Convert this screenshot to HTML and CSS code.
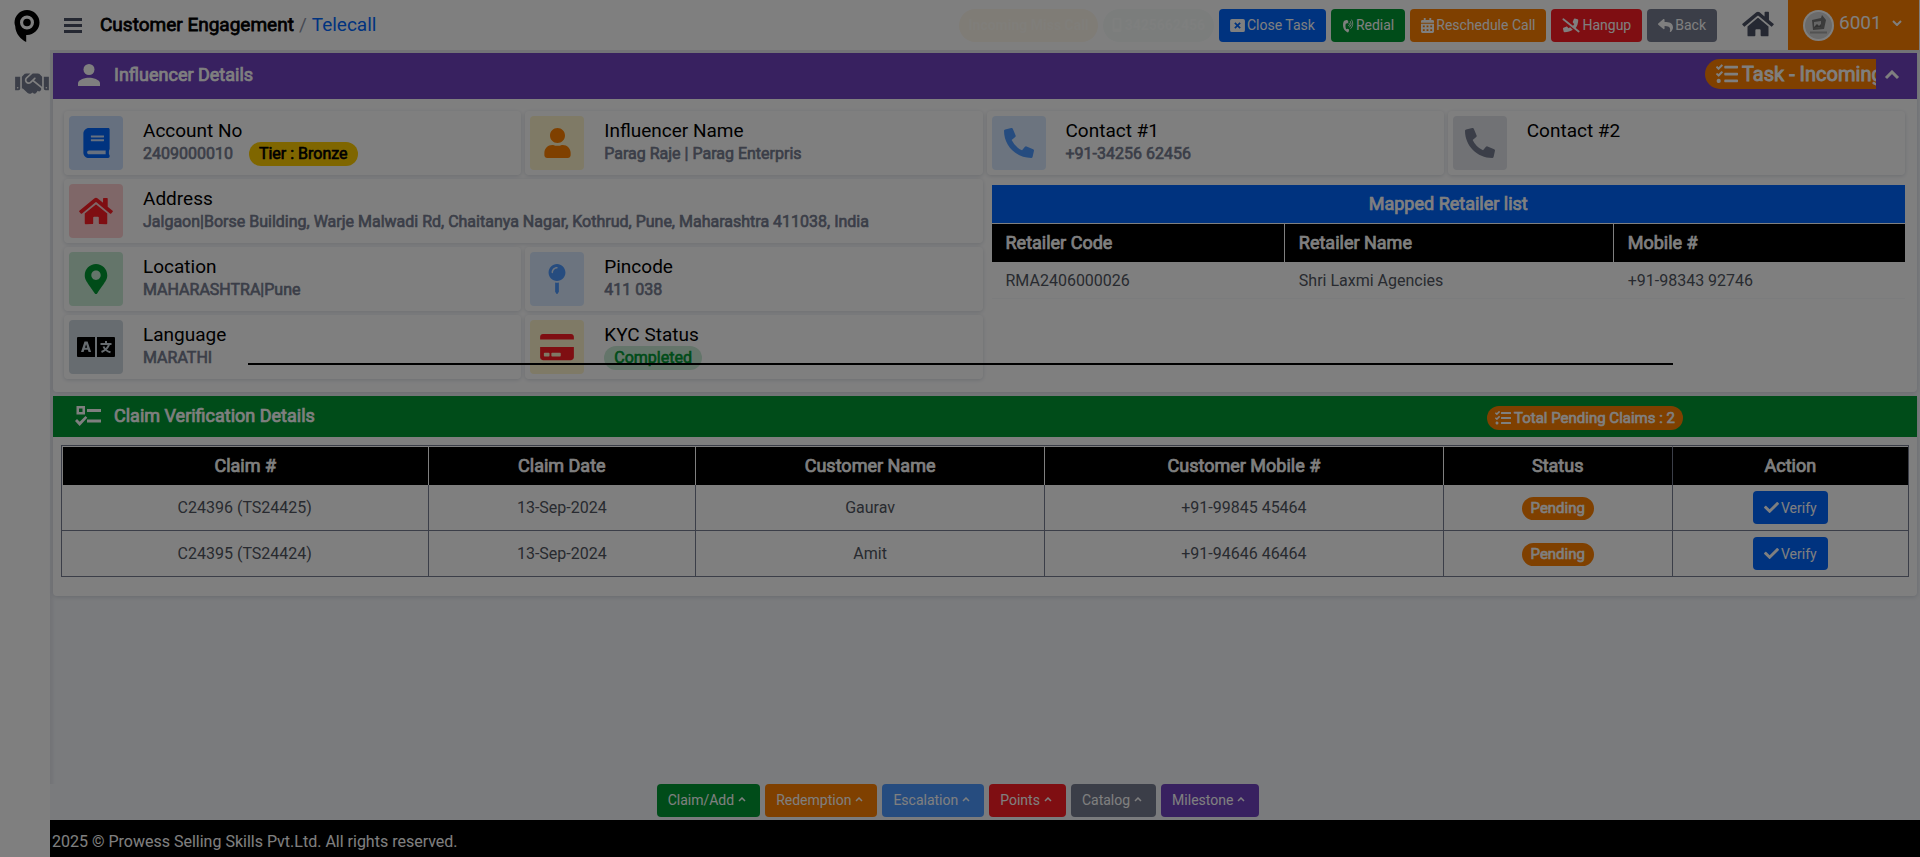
FILE: index.html
```html
<!DOCTYPE html>
<html lang="en">
<head>
<meta charset="utf-8">
<meta name="viewport" content="width=device-width, initial-scale=1">
<title>Customer Engagement - Telecall</title>
<link rel="stylesheet" href="styles.css">
</head>
<body>
<svg class="sprite" aria-hidden="true">
  <symbol id="home" viewBox="0 0 576 512"><path d="M280.37 148.26L96 300.11V464a16 16 0 0 0 16 16l112.06-.29a16 16 0 0 0 15.92-16V368a16 16 0 0 1 16-16h64a16 16 0 0 1 16 16v95.64a16 16 0 0 0 16 16.05L464 480a16 16 0 0 0 16-16V300L295.67 148.26a12.19 12.19 0 0 0-15.3 0zM571.6 251.47L488 182.56V44.05a12 12 0 0 0-12-12h-56a12 12 0 0 0-12 12v72.61L318.47 43a48 48 0 0 0-61 0L4.34 251.47a12 12 0 0 0-1.6 16.9l25.5 31A12 12 0 0 0 45.15 301l235.22-193.74a12.19 12.19 0 0 1 15.3 0L530.9 301a12 12 0 0 0 16.9-1.6l25.5-31a12 12 0 0 0-1.7-16.93z"/></symbol>
  <symbol id="book" viewBox="0 0 448 512"><path d="M448 360V24c0-13.3-10.7-24-24-24H96C43 0 0 43 0 96v320c0 53 43 96 96 96h328c13.3 0 24-10.7 24-24v-16c0-7.5-3.5-14.3-8.9-18.7-4.2-15.4-4.2-59.3 0-74.7 5.4-4.3 8.9-11.1 8.9-18.6zM128 134c0-3.300 2.700-6 6-6h212c3.300 0 6 2.700 6 6v20c0 3.300-2.700 6-6 6H134c-3.300 0-6-2.700-6-6v-20zm0 64c0-3.300 2.700-6 6-6h212c3.300 0 6 2.700 6 6v20c0 3.300-2.700 6-6 6H134c-3.300 0-6-2.700-6-6v-20zm253.400 250H96c-17.700 0-32-14.300-32-32 0-17.600 14.400-32 32-32h285.400c-1.900 17.100-1.900 46.900 0 64z"/></symbol>
  <symbol id="user" viewBox="0 0 448 512"><path d="M224 256c70.700 0 128-57.300 128-128S294.700 0 224 0 96 57.300 96 128s57.300 128 128 128zm89.600 32h-16.700c-22.200 10.200-46.900 16-72.900 16s-50.600-5.800-72.900-16h-16.700C60.200 288 0 348.200 0 422.400V464c0 26.500 21.500 48 48 48h352c26.500 0 48-21.500 48-48v-41.600c0-74.200-60.200-134.400-134.400-134.400z"/></symbol>
  <symbol id="phone" viewBox="0 0 512 512"><path d="M497.390 361.800l-112-48a24 24 0 0 0-28 6.900l-49.600 60.600A370.660 370.660 0 0 1 130.600 204.110l60.600-49.600a23.940 23.940 0 0 0 6.900-28l-48-112A24.160 24.160 0 0 0 122.600.610l-104 24A24 24 0 0 0 0 48c0 256.500 207.900 464 464 464a24 24 0 0 0 23.400-18.600l24-104a24.290 24.290 0 0 0-14.010-27.600z"/></symbol>
  <symbol id="marker" viewBox="0 0 384 512"><path d="M172.268 501.670C26.970 291.031 0 269.413 0 192 0 85.961 85.961 0 192 0s192 85.961 192 192c0 77.413-26.970 99.031-172.268 309.670-9.535 13.774-29.930 13.773-39.464 0zM192 272c44.183 0 80-35.817 80-80s-35.817-80-80-80-80 35.817-80 80 35.817 80 80 80z"/></symbol>
  <symbol id="pin" viewBox="0 0 288 512"><path d="M112 316.940v156.690l22.020 33.020c4.750 7.120 15.220 7.120 19.970 0L176 473.630V316.940c-10.390 1.920-21.060 3.060-32 3.060s-21.610-1.140-32-3.060zM144 0C64.470 0 0 64.470 0 144s64.470 144 144 144 144-64.470 144-144S223.530 0 144 0zm0 76c-37.500 0-68 30.500-68 68 0 6.620-5.380 12-12 12s-12-5.380-12-12c0-50.730 41.280-92 92-92 6.620 0 12 5.380 12 12s-5.380 12-12 12z"/></symbol>
  <symbol id="card" viewBox="0 0 576 512"><path d="M0 432c0 26.500 21.500 48 48 48h480c26.500 0 48-21.500 48-48V256H0v176zm192-68c0-6.600 5.400-12 12-12h136c6.600 0 12 5.400 12 12v40c0 6.600-5.400 12-12 12H204c-6.600 0-12-5.400-12-12v-40zm-128 0c0-6.600 5.400-12 12-12h72c6.600 0 12 5.400 12 12v40c0 6.600-5.400 12-12 12H76c-6.600 0-12-5.400-12-12v-40zM576 80v48H0V80c0-26.500 21.500-48 48-48h480c26.500 0 48 21.500 48 48z"/></symbol>
  <symbol id="reply" viewBox="0 0 512 512"><path d="M8.309 189.836L184.313 37.851C199.719 24.546 224 35.347 224 56.015v80.053c160.629 1.839 288 34.032 288 186.258 0 61.441-39.581 122.309-83.333 154.132-13.653 9.931-33.111-2.533-28.077-18.631 45.344-145.012-21.507-183.510-176.590-185.742V360c0 20.700-24.300 31.453-39.687 18.164l-176.004-152c-11.071-9.562-11.086-26.753 0-36.328z"/></symbol>
  <symbol id="check" viewBox="0 0 512 512"><path d="M173.898 439.404l-166.400-166.400c-9.997-9.997-9.997-26.206 0-36.204l36.203-36.204c9.997-9.998 26.207-9.998 36.204 0L192 312.690 432.095 72.596c9.997-9.997 26.207-9.997 36.204 0l36.203 36.204c9.997 9.997 9.997 26.206 0 36.204l-294.400 294.401c-9.998 9.997-26.207 9.997-36.204-.001z"/></symbol>
  <symbol id="tasks" viewBox="0 0 512 512"><path d="M139.610 35.500a12 12 0 0 0-17 0L58.930 98.810l-22.700-22.120a12 12 0 0 0-17 0L3.530 92.410a12 12 0 0 0 0 17l47.590 47.400a12.780 12.780 0 0 0 17.610 0l15.590-15.620L156.520 69a12.090 12.090 0 0 0 .090-17zm0 159.190a12 12 0 0 0-17 0l-63.680 63.720-22.700-22.100a12 12 0 0 0-17 0L3.530 252a12 12 0 0 0 0 17L51 316.500a12.770 12.770 0 0 0 17.600 0l15.700-15.690 72.200-72.220a12 12 0 0 0 .090-16.900zM64 368c-26.490 0-48.590 21.500-48.590 48S37.530 464 64 464a48 48 0 0 0 0-96zm432 16H208a16 16 0 0 0-16 16v32a16 16 0 0 0 16 16h288a16 16 0 0 0 16-16v-32a16 16 0 0 0-16-16zm0-320H208a16 16 0 0 0-16 16v32a16 16 0 0 0 16 16h288a16 16 0 0 0 16-16V80a16 16 0 0 0-16-16zm0 160H208a16 16 0 0 0-16 16v32a16 16 0 0 0 16 16h288a16 16 0 0 0 16-16v-32a16 16 0 0 0-16-16z"/></symbol>
  <symbol id="handshake" viewBox="0 0 640 512"><path d="M434.700 64h-85.900c-8 0-15.700 3-21.600 8.400l-98.300 90c-.1.1-.2.3-.3.4-16.600 15.600-16.300 40.500-2.100 56 12.700 13.900 39.400 17.600 56.100 2.700.1-.1.3-.1.4-.2l79.900-73.200c6.500-5.900 16.700-5.500 22.600 1 6 6.500 5.500 16.600-1 22.600l-26.100 23.900L504 313.800c2.900 2.400 5.500 5 7.900 7.700V128l-54.600-54.600c-5.900-6-14.100-9.400-22.600-9.400zM544 128.200v223.900c0 17.700 14.300 32 32 32h64V128.200h-96zm48 223.900c-8.800 0-16-7.200-16-16s7.200-16 16-16 16 7.200 16 16-7.200 16-16 16zM0 384h64c17.700 0 32-14.300 32-32V128.200H0V384zm48-63.900c8.800 0 16 7.200 16 16s-7.200 16-16 16-16-7.200-16-16c0-8.900 7.200-16 16-16zm435.900 18.600L334.600 217.500l-30 27.500c-29.700 27.100-75.200 24.500-101.700-4.400-26.900-29.400-24.800-74.900 4.400-101.700L289.100 64h-83.800c-8.500 0-16.600 3.400-22.600 9.400L128 128v223.900h18.300l90.500 81.900c27.400 22.300 67.700 18.100 90-9.300l.2-.2 17.900 15.500c15.900 13 39.400 10.500 52.300-5.400l31.400-38.600 5.400 4.400c13.700 11.100 33.900 9.100 45-4.700l9.500-11.700c11.200-13.800 9.100-33.900-4.600-45.100z"/></symbol>
  <symbol id="redial" viewBox="0 0 24 28"><path d="M9 3 4.500 4.500C1 8 1 19 6 24l4.500 3.500c1 .5 2 .3 2.500-.6l1.200-3.200c.3-.8 0-1.500-.7-2L11 20.500l-2.500.8C6.700 18 6.500 13 7.800 9.800l2.600.2 2-1.800c.5-.6.6-1.400.2-2L11 3.600C10.500 2.900 9.800 2.700 9 3z"/><path d="M14.500 9.500a4 4 0 0 1-1 5M17 6a8.500 8.500 0 0 1-1.500 11M19.500 3a13 13 0 0 1-2 17" fill="none" stroke="currentColor" stroke-width="1.700" stroke-linecap="round"/></symbol>
  <symbol id="hangup" viewBox="0 0 20 16"><path d="M17.200 1 14.400.300c-.5-.1-1 .1-1.200.600l-1.200 3c-.2.400 0 .9.300 1.200l1.400 1.200-2.300 3.200 3 2.300A15 15 0 0 0 18 1.800c0-.4-.3-.7-.8-.8zM9 10l-1.800 1-1.400-1.500c-.3-.3-.8-.4-1.200-.2l-3 1.200c-.4.200-.6.600-.5 1.100l.7 3c.1.500.5.800 1 .8 3.700 0 6.700-1 9.200-2.700z"/><path d="M1.500 1 18.500 14.700" stroke="currentColor" stroke-width="2" stroke-linecap="round"/></symbol>
  <symbol id="close-box" viewBox="0 0 16 14"><path fill-rule="evenodd" d="M2 0h12q2 0 2 2v10q0 2-2 2H2q-2 0-2-2V2q0-2 2-2zM5.800 3.500 4.500 4.800 6.700 7 4.500 9.200l1.300 1.300L8 8.300l2.200 2.200 1.300-1.300L9.300 7l2.200-2.200-1.300-1.300L8 5.700z"/></symbol>
  <symbol id="calendar" viewBox="0 0 14 16"><path fill-rule="evenodd" d="M3 0h2v2h4V0h2v2h1.500Q14 2 14 3.500V5H0V3.500Q0 2 1.500 2H3zM0 6h14v8.500q0 1.500-1.500 1.500h-11Q0 16 0 14.500zM2 8v2h2V8zm4 0v2h2V8zm4 0v2h2V8zM2 12v2h2v-2zm4 0v2h2v-2zm4 0v2h2v-2z"/></symbol>
  <symbol id="mobile" viewBox="0 0 10 16"><path fill-rule="evenodd" d="M1.500 0h7Q10 0 10 1.500v13Q10 16 8.500 16h-7Q0 16 0 14.500v-13Q0 0 1.500 0zM2 2v10h6V2z"/></symbol>
  <symbol id="translate" viewBox="0 0 38 20"><path fill-rule="evenodd" d="M1 0h17v20H1q-1 0-1-1V1q0-1 1-1zM4 15h2.600l.7-2.200h3.600l.7 2.200h2.500L10.600 4.500H7.500zM8 10.700h2.200L9.100 7.300z"/><path d="M20 0h17q1 0 1 1v18q0 1-1 1H20z"/><path d="M29 4v2.500M23.500 7h11M32 7.500c-1 3.500-4 6-7.500 7.500M26.500 9.500c1 2.500 4 5 7 5.800" fill="none" stroke="#ced8e0" stroke-width="2"/></symbol>
  <symbol id="person" viewBox="0 0 22 22"><circle cx="11" cy="5.500" r="5.500"/><path d="M0 22v-2.800C0 15.500 7.300 13.700 11 13.700s11 1.800 11 5.500V22z"/></symbol>
  <symbol id="checklist" viewBox="0 0 26 20"><path fill-rule="evenodd" d="M1.500 0h8.500v8.500H1.500zM4 2.500V6h3.500V2.500zM12 3h14v3H12zM12 13.500h14v3H12zM0 15l2-2 2.700 2.700L10.500 10l1.800 1.800L4.700 20z"/></symbol>
  <symbol id="up" viewBox="0 0 16 10"><path d="m2 8 6-6 6 6" fill="none" stroke="currentColor" stroke-width="3"/></symbol>
</svg>

<div class="app">
  <nav class="sidebar" aria-label="Main">
    <a href="#" class="brand" aria-label="Prowess">
      <svg width="26" height="33" viewBox="0 0 26 33"><path fill-rule="evenodd" d="M13 0a12.500 12.500 0 0 1 0 25l-.8 0V32C7 29.500 1.500 24 1.200 16Q.5 14 .5 12.500A12.500 12.500 0 0 1 13 0zm0 5.500a7 7 0 1 0 0 14 7 7 0 0 0 0-14z"/><circle cx="13" cy="12.500" r="3.800"/></svg>
    </a>
    <a href="#" class="nav-link" aria-label="Engagement"><svg width="34" height="27"><use href="#handshake"/></svg></a>
  </nav>

  <div class="main">
    <header class="topbar">
      <button type="button" class="menu" aria-label="Toggle menu"><span></span><span></span><span></span></button>
      <div class="crumbs"><b>Customer Engagement</b><i>/</i><a href="#">Telecall</a></div>
      <div class="actions">
        <span class="ghost ghost-amber">Incoming Miss Call</span>
        <span class="ghost ghost-mint"><svg width="10" height="14"><use href="#mobile"/></svg>3425662456</span>
        <button type="button" class="btn blue"><svg width="15" height="13"><use href="#close-box"/></svg>Close Task</button>
        <button type="button" class="btn green"><svg width="12" height="15"><use href="#redial"/></svg>Redial</button>
        <button type="button" class="btn orange"><svg width="13" height="15"><use href="#calendar"/></svg>Reschedule Call</button>
        <button type="button" class="btn red"><svg width="18" height="15"><use href="#hangup"/></svg>Hangup</button>
        <button type="button" class="btn gray"><svg width="15" height="15"><use href="#reply"/></svg>Back</button>
      </div>
      <a href="#" class="home" aria-label="Home"><svg width="32" height="28"><use href="#home"/></svg></a>
      <button type="button" class="account">
        <svg width="31" height="31" viewBox="0 0 31 31"><circle cx="15.500" cy="15.500" r="15.500" fill="#fff"/><circle cx="15.500" cy="15.500" r="13.500" fill="#d6d6d6"/><path d="m9 10 9-2 1-3 4 5-2 9-11 1z" fill="#777"/><path d="m11 12 7-1v6l-7 1z" fill="#ccc"/><path d="m11 17 3-3 2 2 2-2v3l-7 1z" fill="#666"/><path d="M7 22.500h17" stroke="#a5a5a5" stroke-width="2"/></svg>
        <span>6001</span>
        <svg width="10" height="6" viewBox="0 0 10 6"><path d="m1 1 4 4 4-4" fill="none" stroke="currentColor" stroke-width="2"/></svg>
      </button>
    </header>

    <main class="content">
      <section class="panel">
        <div class="panel-head purple">
          <svg width="22" height="22"><use href="#person"/></svg>
          <h2>Influencer Details</h2>
          <div class="ticker"><span><svg width="22" height="22"><use href="#tasks"/></svg>Task - Incoming</span></div>
          <button type="button" class="collapse" aria-label="Collapse"><svg width="16" height="10"><use href="#up"/></svg></button>
        </div>
        <div class="cards">
          <div class="card"><div class="tile t-blue"><svg width="27" height="30"><use href="#book"/></svg></div><div class="info"><h3>Account No</h3><p>2409000010 <span class="tag tier">Tier : Bronze</span></p></div></div>
          <div class="card"><div class="tile t-orange"><svg width="27" height="30"><use href="#user"/></svg></div><div class="info"><h3>Influencer Name</h3><p>Parag Raje | Parag Enterpris</p></div></div>
          <div class="card"><div class="tile t-sky"><svg width="30" height="30"><use href="#phone"/></svg></div><div class="info"><h3>Contact #1</h3><p>+91-34256 62456</p></div></div>
          <div class="card"><div class="tile t-gray"><svg width="30" height="30"><use href="#phone"/></svg></div><div class="info"><h3>Contact #2</h3><p></p></div></div>
          <div class="card wide"><div class="tile t-red"><svg width="34" height="30"><use href="#home"/></svg></div><div class="info"><h3>Address</h3><p>Jalgaon|Borse Building, Warje Malwadi Rd, Chaitanya Nagar, Kothrud, Pune, Maharashtra 411038, India</p></div></div>
          <div class="retailers">
            <table>
              <colgroup><col class="r-code"><col class="r-name"><col class="r-mobile"></colgroup>
              <thead>
                <tr><th colspan="3" class="title">Mapped Retailer list</th></tr>
                <tr><th>Retailer Code</th><th>Retailer Name</th><th>Mobile #</th></tr>
              </thead>
              <tbody><tr><td>RMA2406000026</td><td>Shri Laxmi Agencies</td><td>+91-98343 92746</td></tr></tbody>
            </table>
          </div>
          <div class="card"><div class="tile t-green"><svg width="24" height="30"><use href="#marker"/></svg></div><div class="info"><h3>Location</h3><p>MAHARASHTRA|Pune</p></div></div>
          <div class="card"><div class="tile t-sky"><svg width="18" height="30"><use href="#pin"/></svg></div><div class="info"><h3>Pincode</h3><p>411 038</p></div></div>
          <div class="card"><div class="tile t-slate"><svg width="38" height="20"><use href="#translate"/></svg></div><div class="info"><h3>Language</h3><p>MARATHI</p></div></div>
          <div class="card"><div class="tile t-card"><svg width="34" height="30"><use href="#card"/></svg></div><div class="info"><h3>KYC Status</h3><p><span class="tag done">Completed</span></p></div></div>
        </div>
      </section>

      <section class="panel">
        <div class="panel-head forest">
          <svg width="26" height="20"><use href="#checklist"/></svg>
          <h2>Claim Verification Details</h2>
          <span class="tag total"><svg width="16" height="16"><use href="#tasks"/></svg>Total Pending Claims : 2</span>
        </div>
        <table class="claims">
          <colgroup><col class="c-id"><col class="c-date"><col class="c-name"><col class="c-mobile"><col class="c-status"><col class="c-action"></colgroup>
          <thead><tr><th>Claim #</th><th>Claim Date</th><th>Customer Name</th><th>Customer Mobile #</th><th>Status</th><th>Action</th></tr></thead>
          <tbody>
            <tr><td>C24396 (TS24425)</td><td>13-Sep-2024</td><td>Gaurav</td><td>+91-99845 45464</td><td><span class="tag pending">Pending</span></td><td><button type="button" class="btn blue"><svg width="15" height="15"><use href="#check"/></svg>Verify</button></td></tr>
            <tr><td>C24395 (TS24424)</td><td>13-Sep-2024</td><td>Amit</td><td>+91-94646 46464</td><td><span class="tag pending">Pending</span></td><td><button type="button" class="btn blue"><svg width="15" height="15"><use href="#check"/></svg>Verify</button></td></tr>
          </tbody>
        </table>
      </section>
    </main>

    <div class="dock">
      <button type="button" class="btn green">Claim/Add<svg width="8" height="5"><use href="#up"/></svg></button>
      <button type="button" class="btn orange">Redemption<svg width="8" height="5"><use href="#up"/></svg></button>
      <button type="button" class="btn sky">Escalation<svg width="8" height="5"><use href="#up"/></svg></button>
      <button type="button" class="btn red">Points<svg width="8" height="5"><use href="#up"/></svg></button>
      <button type="button" class="btn gray">Catalog<svg width="8" height="5"><use href="#up"/></svg></button>
      <button type="button" class="btn violet">Milestone<svg width="8" height="5"><use href="#up"/></svg></button>
    </div>
    <footer>2025 © Prowess Selling Skills Pvt.Ltd. All rights reserved.</footer>
  </div>
</div>

<div class="backdrop"><div class="dialog" role="dialog" aria-label="Dialog"></div></div>
</body>
</html>
```
FILE: styles.css
```css
* { box-sizing: border-box; }

body {
  margin: 0;
  font: 16px/24px Roboto, "Liberation Sans", sans-serif;
  color: #505560;
  background: #f4f6fa;
}

h2, h3, p { margin: 0; }
a { text-decoration: none; }
svg { fill: currentColor; flex: none; }
button { font: inherit; color: inherit; border: 0; margin: 0; padding: 0; background: none; }
.sprite { position: absolute; width: 0; height: 0; }

/* Emphasis thickens the regular face */
.crumbs b, .panel-head h2, .ticker, .info p, .tag, th {
  font-weight: 400;
  -webkit-text-stroke: 0.04em currentColor;
}

.app { display: flex; min-height: 100vh; }

/* Sidebar */
.sidebar {
  width: 50px;
  flex: none;
  display: flex;
  flex-direction: column;
  background: #fff;
}
.brand { color: #000; padding: 10px 0 0 14px; height: 70px; }
.nav-link { color: #767c90; padding-left: 15px; display: flex; }

.main { flex: 1; min-width: 0; display: flex; flex-direction: column; }

/* Top bar */
.topbar { display: flex; height: 50px; background: #fff; align-items: center; padding-right: 1px; }
.menu { display: flex; flex-direction: column; gap: 3px; padding-left: 14px; }
.menu span { width: 18px; height: 3px; background: #4a5064; }
.crumbs { font-size: 19px; margin-left: 18px; display: flex; }
.crumbs b { color: #000; }
.crumbs i { font-style: normal; color: #8d93a5; margin: 0 5px; }
.crumbs a { color: #06f; }
.actions { display: flex; gap: 5px; margin-left: auto; }
.home { color: #4a5064; margin: -3px 14px 0 25px; display: flex; }
.account {
  align-self: stretch;
  width: 131px;
  display: flex;
  align-items: center;
  gap: 5px;
  padding-left: 15px;
  background: #ff8000;
  color: #fff;
  font-size: 19px;
}
.account span { margin: -5px 5px 0 0; }
.account svg:last-child { margin-top: -5px; }

.btn {
  display: inline-flex;
  align-items: center;
  gap: 2px;
  height: 33px;
  padding: 0 11px;
  border-radius: 4px;
  font-size: 14px;
  color: #fff;
  white-space: nowrap;
}
.blue { background: #06f; }
.green { background: #093; }
.orange { background: #ff8000; }
.red { background: #ff1d25; }
.gray { background: #767c90; }
.sky { background: #4d99ff; }
.violet { background: #7042c1; }

.ghost {
  display: flex;
  align-items: center;
  gap: 3px;
  height: 33px;
  padding: 0 9px;
  border-radius: 17px;
  font-size: 14px;
  font-weight: 700;
}
.ghost-amber { background: #fff8ec; color: #fffcf4; }
.ghost-mint { background: #f6fbf9; color: #fcfefd; }

/* Panels */
.content { flex: 1; padding: 3px; box-shadow: inset 3px 3px 3px #e6e8ee; }
.panel { background: #fff; border-radius: 4px; margin-bottom: 4px; box-shadow: 0 1px 4px #d0d4dc; }
.panel-head { display: flex; align-items: center; color: #fff; }
.panel-head h2 { font-size: 18px; }
.purple { background: #7042c1; height: 46px; padding: 0 17px 2px 25px; gap: 14px; }
.forest { background: #093; height: 41px; padding: 0 0 2px 22px; gap: 13px; }
.ticker { margin: -3px -6px 0 auto; width: 171px; overflow: hidden; font-size: 20px; }
.ticker span {
  display: flex;
  align-items: center;
  gap: 4px;
  width: max-content;
  height: 30px;
  padding: 0 11px;
  border-radius: 15px;
  background: #ff8000;
}
.collapse { display: flex; }

/* Detail cards */
.cards { display: grid; grid-template-columns: repeat(4, 1fr); gap: 4px; padding: 12px 12px 13px 11px; }
.card {
  display: flex;
  gap: 20px;
  height: 64px;
  padding: 5px;
  border-radius: 4px;
  background: #fff;
  box-shadow: 0 1px 4px #d8dbe2;
}
.wide { grid-column: span 2; }
.tile { width: 54px; height: 54px; border-radius: 4px; display: grid; place-items: center; flex: none; }
.info { padding-top: 3px; }
.info h3 { font-size: 19px; font-weight: 400; color: #000; }
.info p { color: #767c90; white-space: nowrap; line-height: 22px; }
.t-blue { background: #cce0ff; color: #06f; }
.t-orange { background: #fff5cc; color: #ff8000; }
.t-sky { background: #d9e9ff; color: #4d99ff; }
.t-gray { background: #e2e5ea; color: #767c90; }
.t-red { background: #ffcfd1; color: #ff1d25; }
.t-green { background: #c8ebd5; color: #093; }
.t-slate { background: #ced8e0; color: #000; }
.t-card { background: #fff5cc; color: #ff1d25; }

.tag { display: inline-flex; align-items: center; gap: 3px; height: 24px; padding: 0 10px; border-radius: 12px; }
.tier, .done { margin: -1px 0; }
.tier { background: #fc0; color: #000; margin-left: 12px; }
.done { background: #c8ebd5; color: #093; }
.total { background: #ff8000; padding: 0 8px; margin: 4px 234px 0 auto; font-size: 15px; }
.pending { background: #ff8000; color: #fff; padding: 0 9px; height: 23px; font-size: 15px; }

/* Tables */
table { border-spacing: 0; table-layout: fixed; }
th { background: #000; color: #fff; font-size: 18px; height: 39px; padding: 0; }
.retailers { grid-column: 3 / 5; grid-row: 2 / 5; padding: 6px 0 0 5px; }
.retailers table { width: 100%; }
.retailers th { text-align: left; padding: 0 14px; border-bottom: 1px solid #fff; }
.retailers th + th { border-left: 1px solid #fff; }
.retailers .title { background: #06f; text-align: center; }
.retailers td { height: 36px; padding: 0 14px; border-bottom: 1px solid #f7f8fa; }
.retailers td + td { padding-left: 15px; }
.r-code { width: 32%; }
.r-name { width: 36%; }
.r-mobile { width: 32%; }

.claims { width: calc(100% - 16px); margin: 8px; border: 1px solid #767c90; }
.claims th { border-top: 1px solid #fff; border-left: 1px solid #fff; }
.claims th:last-child { border-left-color: #767c90; }
.claims td { height: 46px; padding: 0; text-align: center; border-left: 1px solid #767c90; }
.claims td:first-child { border-left: 0; }
.claims tr:first-child td { height: 45px; }
.claims tr + tr td { border-top: 1px solid #767c90; }
.claims td .tag, .claims td .btn { vertical-align: middle; }
.c-id { width: 19.8%; }
.c-date { width: 14.5%; }
.c-name { width: 18.9%; }
.c-mobile { width: 21.6%; }
.c-status { width: 12.4%; }
.c-action { width: 12.8%; }
.panel:last-child { padding-bottom: 11px; }

/* Bottom actions */
.dock { display: flex; justify-content: center; gap: 5px; padding: 0 54px 3px 0; }
.dock .btn { gap: 4px; padding: 0 14px 2px 11px; }
footer { background: #000; color: #fff; height: 37px; padding: 10px 2px 3px; }

/* Dialog layer */
.backdrop { position: fixed; inset: 0; background: rgba(0, 0, 0, 0.5); }
.dialog { width: 1425px; max-width: 90%; height: 2px; margin: 363px auto 0; background: #000; }
```
